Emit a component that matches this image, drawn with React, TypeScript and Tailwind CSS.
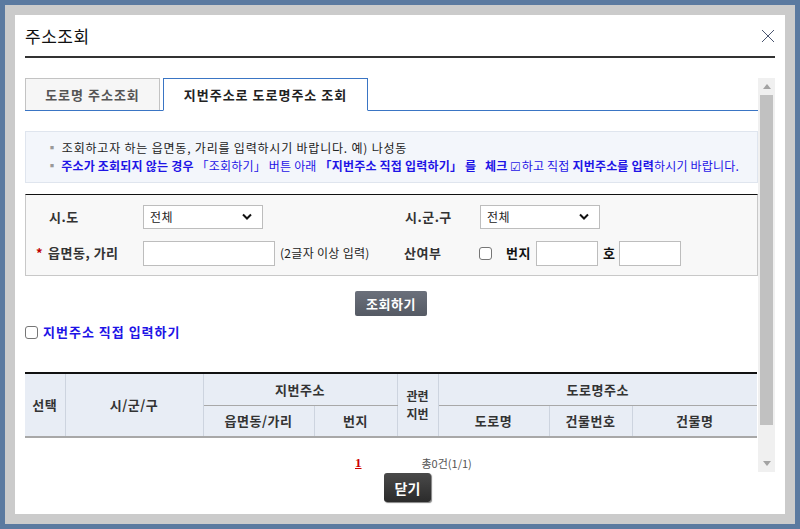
import React from 'react'

const font = { fontFamily: '"Noto Sans CJK KR", "Noto Sans", sans-serif' }

function FakeSelect({ w }: { w: string }) {
  return (
    <div className={`${w} h-[24px] bg-white border border-[#bdbdbd] flex items-center justify-between pl-[6px] pr-[10px]`}>
      <span className="text-[12px] text-[#222]">전체</span>
      <svg width="10" height="7" viewBox="0 0 10 7">
        <path d="M1 1.5 L5 5.5 L9 1.5" fill="none" stroke="#111" strokeWidth="2" />
      </svg>
    </div>
  )
}

function Box({ w }: { w: string }) {
  return <div className={`${w} h-[25px] shrink-0 bg-white border border-[#bdbdbd]`} />
}

function Check() {
  return <div className="w-[13px] h-[13px] shrink-0 rounded-[3px] border border-[#767676] bg-white" />
}

const th = 'border-x border-[#cdd4df] text-[13px] tracking-[0.5px] font-bold text-[#333] text-center p-0'

export default function App() {
  return (
    <div className="w-[800px] h-[529px] bg-[#5b7aa0] p-[5px]" style={font}>
      <div className="h-full bg-[#cbcbcb] p-[10px]">
        <div className="h-full bg-white px-[10px] flex flex-col">
          {/* header */}
          <div className="h-[41px] shrink-0 flex items-center justify-between">
            <h1 className="text-[17px] tracking-[0.5px] text-[#111] leading-none">주소조회</h1>
            <svg width="14" height="14" viewBox="0 0 14 14">
              <path d="M1 1 L13 13 M13 1 L1 13" stroke="#4a5570" strokeWidth="1" />
            </svg>
          </div>
          <div className="h-[2px] shrink-0 bg-[#333]" />

          {/* scroll body */}
          <div className="mt-[20px] h-[394px] shrink-0 flex overflow-hidden">
            <div className="flex-1">
              {/* tabs */}
              <div className="h-[33px] flex gap-[3px] border-b border-[#3a75c4]">
                <div className="w-[135px] h-[32px] bg-[#f6f6f6] border border-[#c3c3c3] border-b-0 flex items-center justify-center text-[13px] tracking-[1px] font-bold text-[#555]">
                  도로명 주소조회
                </div>
                <div className="w-[205px] h-[33px] bg-white border border-[#3a75c4] border-b-white flex items-center justify-center text-[13px] tracking-[1px] font-bold text-[#222]">
                  지번주소로 도로명주소 조회
                </div>
              </div>

              {/* info */}
              <div className="mt-[20px] h-[52px] bg-[#f3f6fb] border border-[#dfe5ee] pl-[20px] flex flex-col justify-center gap-[2px] text-[12px] leading-[16px]">
                <p className="text-[#222] tracking-[0.8px] whitespace-nowrap"><span className="text-[#999] mr-[3px]">▪</span>조회하고자 하는 읍면동, 가리를 입력하시기 바랍니다. 예) 나성동</p>
                <p className="text-[#1e14e6] tracking-[0.2px] whitespace-nowrap">
                  <span className="text-[#999] mr-[3px]">▪</span>
                  <b>주소가 조회되지 않는 경우</b> 「조회하기」 버튼 아래 <b>「지번주소 직접 입력하기」 를&nbsp;&nbsp; 체크</b> ☑하고 직접 <b>지번주소를 입력</b>하시기 바랍니다.
                </p>
              </div>

              {/* form */}
              <div className="mt-[11px] h-[82px] bg-[#f8f8f8] border border-[#c8c8c8] border-t-[#111] flex flex-col justify-center gap-[12px] text-[13px] text-[#333] tracking-[0.5px]">
                <div className="flex items-center">
                  <span className="w-[117px] pl-[23px] font-bold">시.도</span>
                  <FakeSelect w="w-[120px]" />
                  <span className="ml-[142px] w-[75px] font-bold">시.군.구</span>
                  <FakeSelect w="w-[120px]" />
                </div>
                <div className="flex items-center">
                  <span className="w-[117px] shrink-0 pl-[10px] font-bold whitespace-nowrap"><span className="text-[#c00000] mr-[5px]">*</span>읍면동, 가리</span>
                  <Box w="w-[132px]" />
                  <span className="ml-[5px] w-[124px] shrink-0 text-[12px] text-[#222] tracking-[0.3px] whitespace-nowrap">(2글자 이상 입력)</span>
                  <span className="w-[75px] shrink-0 font-bold">산여부</span>
                  <Check />
                  <span className="ml-[14px] w-[30px] shrink-0 font-bold text-[#111]">번지</span>
                  <Box w="w-[62px]" />
                  <span className="ml-[5px] w-[16px] shrink-0 font-bold text-[#111]">호</span>
                  <Box w="w-[62px]" />
                </div>
              </div>

              {/* search button */}
              <div className="mt-[15px] flex pl-[330px]">
                <button className="w-[72px] h-[25px] rounded-[2px] bg-gradient-to-b from-[#6b707b] to-[#555a64] text-white text-[13px] tracking-[0.5px] font-bold leading-none">
                  조회하기
                </button>
              </div>

              {/* direct input */}
              <label className="mt-[9px] h-[14px] flex items-center gap-[5px]">
                <Check />
                <span className="text-[13px] tracking-[1px] font-bold text-[#1e14e6]">지번주소 직접 입력하기</span>
              </label>

              {/* table */}
              <table className="mt-[33px] w-[732px] border-collapse table-fixed">
                <colgroup>
                  <col className="w-[40px]" />
                  <col className="w-[138px]" />
                  <col className="w-[111px]" />
                  <col className="w-[83px]" />
                  <col className="w-[41px]" />
                  <col className="w-[111px]" />
                  <col className="w-[83px]" />
                  <col className="w-[125px]" />
                </colgroup>
                <thead className="bg-[#e8edf5] border-t-2 border-t-[#111] border-b-2 border-b-[#a8a8a8]">
                  <tr className="h-[32px]">
                    <th rowSpan={2} className={th + ' border-l-0'}>선택</th>
                    <th rowSpan={2} className={th}>시/군/구</th>
                    <th colSpan={2} className={th + ' border-b border-b-[#a8a8a8]'}>지번주소</th>
                    <th rowSpan={2} className="border-x border-[#cdd4df] text-[12px] font-bold text-[#333] text-center p-0">
                      <div className="leading-[18px]">관련</div>
                      <div className="leading-[18px]">지번</div>
                    </th>
                    <th colSpan={3} className={th + ' border-b border-b-[#a8a8a8] border-r-0'}>도로명주소</th>
                  </tr>
                  <tr className="h-[32px]">
                    <th className={th}>읍면동/가리</th>
                    <th className={th}>번지</th>
                    <th className={th}>도로명</th>
                    <th className={th}>건물번호</th>
                    <th className={th + ' border-r-0'}>건물명</th>
                  </tr>
                </thead>
              </table>

              {/* paging */}
              <div className="mt-[15px] flex items-center">
                <span className="ml-[330px] text-[13px] font-bold text-[#cc0000] underline" style={{ fontFamily: '"Liberation Serif", serif' }}>1</span>
                <span className="ml-[60px] text-[11px] text-[#555]">총0건(1/1)</span>
              </div>
            </div>

            {/* scrollbar */}
            <div className="w-[17px] h-full bg-[#f0f0f0] flex flex-col items-center">
              <div className="h-[17px] flex items-center justify-center">
                <svg width="8" height="5" viewBox="0 0 8 5"><path d="M0 5 L4 0 L8 5 Z" fill="#a3a3a3" /></svg>
              </div>
              <div className="w-[13px] flex-1 bg-[#c1c1c1] mb-[30px]" />
              <div className="h-[17px] flex items-center justify-center">
                <svg width="8" height="5" viewBox="0 0 8 5"><path d="M0 0 L8 0 L4 5 Z" fill="#a3a3a3" /></svg>
              </div>
            </div>
          </div>

          {/* footer */}
          <div className="mt-[1px] pl-[359px]">
            <button className="w-[47px] h-[29px] rounded-[3px] bg-gradient-to-b from-[#4a4a4a] to-[#2b2b2b] text-white text-[14px] font-bold leading-none shadow-[1px_1px_1px_rgba(0,0,0,0.5)]">
              닫기
            </button>
          </div>
        </div>
      </div>
    </div>
  )
}
